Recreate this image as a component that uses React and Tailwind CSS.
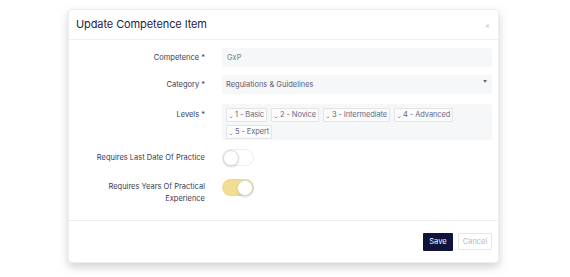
import React from 'react'

const levels = ['1 - Basic', '2 - Novice', '3 - Intermediate', '4 - Advanced', '5 - Expert']

function Caret() {
  return (
    <svg width="4" height="3" viewBox="0 0 4 3" className="mt-[4px] shrink-0">
      <path d="M0.7 0.6 L2 2 L3.3 0.6" fill="none" stroke="#7a7d8e" strokeWidth="0.7" />
    </svg>
  )
}

function Toggle({ on }) {
  return (
    <div
      className={`w-[32px] h-[17px] rounded-full border flex items-center ${
        on ? 'bg-[#f2de92] border-[#efd98a] justify-end' : 'bg-white border-[#ececef] justify-start'
      }`}
    >
      <div className="w-[16px] h-[16px] rounded-full bg-white border border-[#dcdce0] shadow-[0_1px_2px_rgba(0,0,0,0.15)]" />
    </div>
  )
}

export default function App() {
  return (
    <div className="w-[570px] h-[277px] bg-white overflow-hidden font-['Inter',sans-serif]">
      <div className="ml-[68px] mt-[9px] w-[431px] bg-white rounded-[4px] border border-[#eeeeef] shadow-[0_4px_10px_rgba(0,0,0,0.18)]">
        {/* Header */}
        <div className="h-[30px] flex items-center justify-between pl-[7px] pr-[8px] border-b border-[#efeff1]">
          <h1 className="text-[11px] text-[#24243f] tracking-[-0.1px]">Update Competence Item</h1>
          <span className="text-[8px] text-[#c4c4c8] leading-none">×</span>
        </div>

        {/* Body */}
        <div className="pt-[8px] pb-[15px] pr-[6px] flex flex-col text-[7.5px]">
          <div className="flex items-center">
            <label className="w-[136px] text-right text-[#3a3a52]">Competence *</label>
            <div className="ml-[17px] flex-1 h-[19px] bg-[#f6f7f8] rounded-[2px] flex items-center px-[5px] text-[#7a7b8c]">
              GxP
            </div>
          </div>

          <div className="flex items-center mt-[8px]">
            <label className="w-[136px] text-right text-[#3a3a52]">Category *</label>
            <div className="ml-[17px] flex-1 h-[19px] bg-[#f6f7f8] rounded-[2px] flex items-center justify-between pl-[4px] pr-[5px] text-[#5b5c70]">
              <span>Regulations &amp; Guidelines</span>
              <span className="text-[4px] text-[#6a6a7a] -mt-[5px]">▼</span>
            </div>
          </div>

          <div className="flex items-start mt-[10px]">
            <label className="w-[136px] text-right text-[#3a3a52] pt-[5px]">Levels *</label>
            <div className="ml-[17px] flex-1 h-[36px] bg-[#f6f7f8] rounded-[2px] flex flex-wrap content-start gap-x-[4px] gap-y-[3px] pt-[4px] px-[4px]">
              {levels.map(l => (
                <div
                  key={l}
                  className="h-[14px] flex items-center gap-[2px] px-[2px] bg-[#fbfbfc] border border-[#e3e4e8] rounded-[1px] text-[7.5px] text-[#686a7e] tracking-[-0.1px]"
                >
                  <Caret />
                  <span>{l}</span>
                </div>
              ))}
            </div>
          </div>

          <div className="flex items-center mt-[9px]">
            <label className="w-[136px] text-right text-[#3a3a52]">Requires Last Date Of Practice</label>
            <div className="ml-[17px]">
              <Toggle on={false} />
            </div>
          </div>

          <div className="flex items-start mt-[13px]">
            <label className="w-[136px] text-right text-[#3a3a52] leading-[12px] pt-[2px]">
              Requires Years Of Practical
              <br />
              Experience
            </label>
            <div className="ml-[17px]">
              <Toggle on={true} />
            </div>
          </div>
        </div>

        {/* Footer */}
        <div className="h-[42px] border-t border-[#efeff1] flex items-center justify-end gap-[5px] pr-[6px]">
          <button className="w-[30px] h-[18px] bg-[#10133a] text-white text-[7.5px] rounded-[1px]">Save</button>
          <button className="w-[34px] h-[17px] bg-white border border-[#e6e6ea] text-[#b8b9c2] text-[7.5px] rounded-[1px]">
            Cancel
          </button>
        </div>
      </div>
    </div>
  )
}
